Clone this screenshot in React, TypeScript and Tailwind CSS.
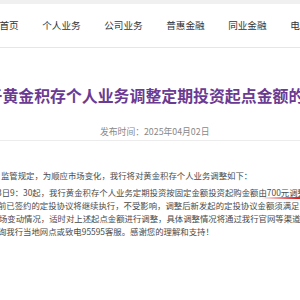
import React from "react";

const font = { fontFamily: '"Noto Sans CJK SC", "Noto Sans", sans-serif' };

export default function App() {
  const nav = ["首页", "个人业务", "公司业务", "普惠金融", "同业金融", "电子银行"];
  return (
    <div className="w-[300px] h-[300px] overflow-hidden bg-white" style={font}>
      <div className="h-[4px] bg-[#f0f0f0]" />
      <div className="h-[44px] border-b border-[#e6e6e6] flex items-center overflow-hidden">
        <div className="flex items-center gap-[23.6px] ml-[-0.5px] whitespace-nowrap text-[9.6px] leading-none text-[#333]">
          {nav.map((n) => (
            <span key={n}>{n}</span>
          ))}
        </div>
      </div>
      <div className="mt-[38px] whitespace-nowrap ml-[-13.5px] text-[15.9px] leading-[20px] font-bold text-[#6b3a91]">
        于黄金积存个人业务调整定期投资起点金额的公告
      </div>
      <div className="mt-[20px] pl-[100px] text-[8.8px] leading-[12px] text-[#888] whitespace-nowrap">
        发布时间：2025年04月02日
      </div>
      <div className="mt-[2px] border-b border-[#ececec]" />
      <div className="mt-[28px] text-[8.4px] leading-[13px] text-[#4a4a4a] whitespace-nowrap">
        <div className="ml-[1px]">监管规定，为顺应市场变化，我行将对黄金积存个人业务调整如下：</div>
        <div className="mt-[4px] ml-[-3px]">
          3日9：30起，我行黄金积存个人业务定期投资按固定金额投资起购金额由
          <span className="relative">
            700元调整为1000元
            <span className="absolute left-[-6px] right-0 bottom-[-1px] h-[2px] rounded-full bg-[linear-gradient(to_right,rgba(230,40,40,0),#e02020_45%)]" />
          </span>
        </div>
        <div className="ml-[-10.4px]">此前已签约的定投协议将继续执行，不受影响，调整后新发起的定投协议金额须满足</div>
        <div className="ml-[-9.4px]">市场变动情况，适时对上述起点金额进行调整，具体调整情况将通过我行官网等渠道公告</div>
        <div className="ml-[-10.4px]">咨询我行当地网点或致电95595客服。感谢您的理解和支持！</div>
      </div>
    </div>
  );
}
